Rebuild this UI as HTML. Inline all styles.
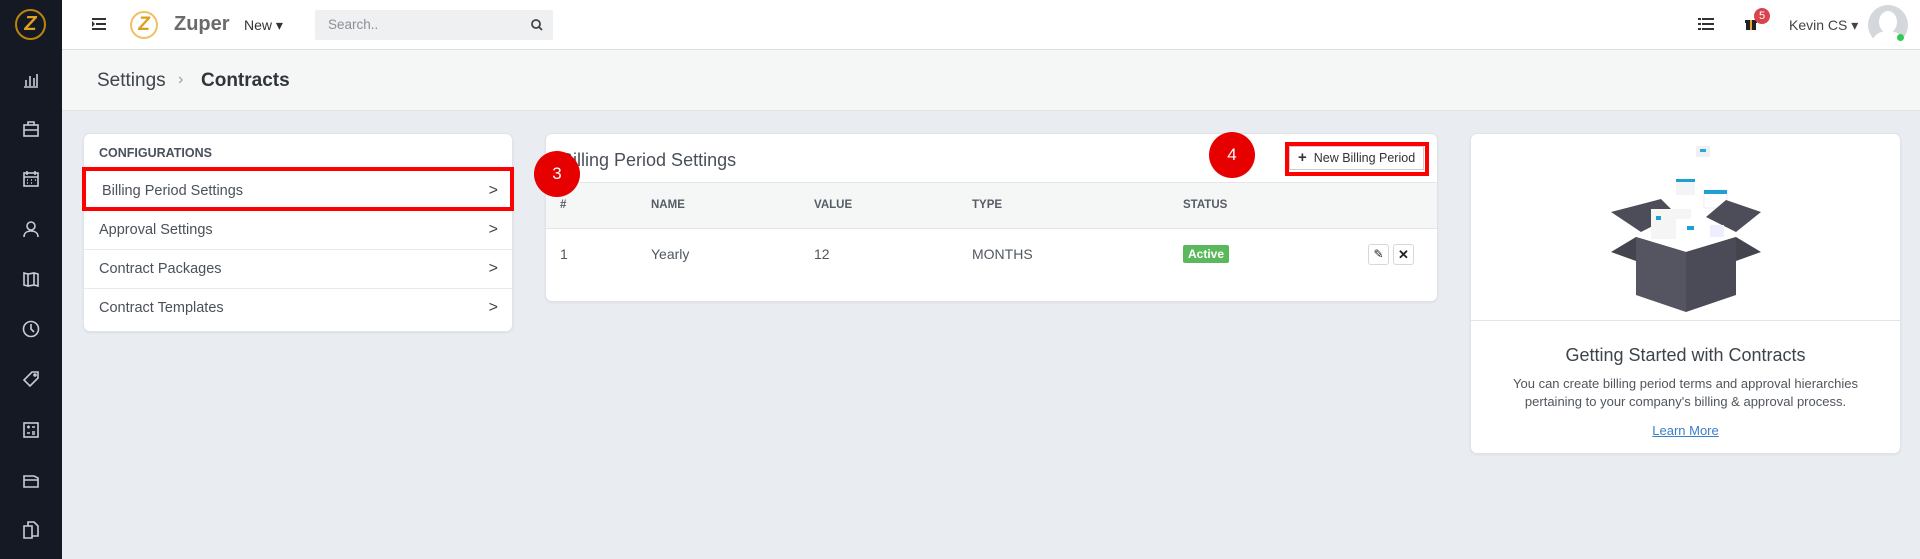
<!DOCTYPE html>
<html><head><meta charset="utf-8"><style>
*{box-sizing:border-box;margin:0;padding:0}
body{width:1920px;height:559px;overflow:hidden;background:#e9ecf0;font-family:"Liberation Sans",sans-serif;position:relative;color:#3f4650}
.abs{position:absolute}
.side{left:0;top:0;width:62px;height:559px;background:#151923}
.side svg{position:absolute;left:22px}
.hdr{left:62px;top:0;right:0;height:50px;background:#fff;border-bottom:1px solid #dcdfe3}
.crumb{left:62px;top:50px;right:0;height:61px;background:#f5f6f6;border-bottom:1px solid #e0e3e6}
.card{background:#fff;border:1px solid #e0e3e7;border-radius:7px;box-shadow:0 1px 2px rgba(0,0,0,.06)}
.row{position:absolute;left:0;right:0;height:39px;border-top:1px solid #e8eaed;font-size:14.5px;color:#4a515a;padding-left:15px;line-height:38px}
.row .ch{position:absolute;right:14px;top:0;font-size:16px;color:#444}
.th{position:absolute;top:199px;font-size:11.5px;font-weight:bold;color:#555c66}
.td{position:absolute;top:246px;font-size:14px;color:#50575f}
.badge{position:absolute;width:46px;height:46px;border-radius:50%;background:#e60000;color:#fff;font-size:17px;text-align:center;line-height:46px}
</style></head><body>
<div class="abs side">
 <div class="abs" style="left:15px;top:9px;width:31px;height:31px;border-radius:50%;border:2px solid #b8860b;color:#e0a020;font-weight:bold;font-size:20px;text-align:center;line-height:27px;font-style:italic">Z</div>
 <svg style="top:71px" width="18" height="18" viewBox="0 0 18 18" fill="none" stroke="#c8ccd4" stroke-width="1.6"><path d="M2 16h14M4 15V9M8 15V5M12 15V7M15 15V3"/></svg>
 <svg style="top:120px" width="18" height="18" viewBox="0 0 18 18" fill="none" stroke="#c8ccd4" stroke-width="1.6"><rect x="2" y="5" width="14" height="11"/><path d="M6 5V2h6v3M2 10h14"/></svg>
 <svg style="top:170px" width="18" height="18" viewBox="0 0 18 18" fill="none" stroke="#c8ccd4" stroke-width="1.6"><rect x="2" y="3" width="14" height="13"/><path d="M2 7h14M5 1v4M13 1v4M5 10h1M9 10h1M13 10h1M5 13h1M9 13h1"/></svg>
 <svg style="top:220px" width="18" height="18" viewBox="0 0 18 18" fill="none" stroke="#c8ccd4" stroke-width="1.6"><circle cx="9" cy="6" r="4"/><path d="M2 17c0-4 3-6 7-6s7 2 7 6"/></svg>
 <svg style="top:270px" width="18" height="18" viewBox="0 0 18 18" fill="none" stroke="#c8ccd4" stroke-width="1.6"><path d="M2 3l4 1 6-1 4 1v12l-4-1-6 1-4-1zM6 4v12M12 3v12"/></svg>
 <svg style="top:320px" width="18" height="18" viewBox="0 0 18 18" fill="none" stroke="#c8ccd4" stroke-width="1.6"><circle cx="9" cy="9" r="7.5"/><path d="M9 4v5l3 3"/></svg>
 <svg style="top:370px" width="18" height="18" viewBox="0 0 18 18" fill="none" stroke="#c8ccd4" stroke-width="1.6"><path d="M10 2h6v6l-8 8-6-6z"/><circle cx="13" cy="5" r="1"/></svg>
 <svg style="top:421px" width="18" height="18" viewBox="0 0 18 18" fill="none" stroke="#c8ccd4" stroke-width="1.6"><rect x="2" y="2" width="14" height="14"/><path d="M5 6h3M6.5 4.5v3M10 6h3M5 12h3M10 11h3M10 13h3"/></svg>
 <svg style="top:471px" width="18" height="18" viewBox="0 0 18 18" fill="none" stroke="#c8ccd4" stroke-width="1.6"><path d="M2 5h10l4 2v9H2zM2 9h14"/></svg>
 <svg style="top:521px" width="18" height="18" viewBox="0 0 18 18" fill="none" stroke="#c8ccd4" stroke-width="1.6"><path d="M2 5h8v12H2zM6 5V1h6l4 4v10h-6"/></svg>
</div>
<div class="abs hdr">
 <svg class="abs" style="left:30px;top:18px" width="14" height="12" viewBox="0 0 14 12" fill="#333"><rect x="0" y="0" width="14" height="2"/><rect x="4" y="5" width="10" height="2"/><rect x="0" y="10" width="14" height="2"/><path d="M0 3l3 3-3 3z"/></svg>
 <div class="abs" style="left:68px;top:11px;width:28px;height:28px;border-radius:50%;border:2px solid #f0c060;color:#d9a020;font-weight:bold;font-style:italic;font-size:19px;text-align:center;line-height:24px">Z</div>
 <div class="abs" style="left:112px;top:13px;font-size:20px;font-weight:bold;color:#6b6b6b">Zuper</div>
 <div class="abs" style="left:182px;top:17px;font-size:14px;color:#333">New ▾</div>
 <div class="abs" style="left:253px;top:10px;width:238px;height:30px;background:#eef0f2;border-radius:2px"><span class="abs" style="left:13px;top:7px;font-size:13.5px;color:#8b9097">Search..</span><svg class="abs" style="left:216px;top:9px" width="12" height="12" viewBox="0 0 12 12" fill="none" stroke="#444" stroke-width="1.8"><circle cx="5" cy="5" r="4"/><path d="M8 8l3 3"/></svg></div>
 <svg class="abs" style="left:1636px;top:18px" width="16" height="12" viewBox="0 0 16 12" fill="#333"><rect y="0" width="3" height="2"/><rect x="4" y="0" width="12" height="2"/><rect y="5" width="3" height="2"/><rect x="4" y="5" width="12" height="2"/><rect y="10" width="3" height="2"/><rect x="4" y="10" width="12" height="2"/></svg>
 <svg class="abs" style="left:1682px;top:16px" width="14" height="14" viewBox="0 0 14 14" fill="#222"><rect x="1" y="4" width="12" height="3"/><rect x="2" y="7" width="10" height="7"/><rect x="6" y="4" width="2" height="10" fill="#e8a53a"/></svg>
 <div class="abs" style="left:1692px;top:8px;width:16px;height:16px;border-radius:50%;background:#d9434e;color:#fff;font-size:11px;text-align:center;line-height:16px">5</div>
 <div class="abs" style="left:1727px;top:17px;font-size:14px;color:#444">Kevin CS ▾</div>
 <div class="abs" style="left:1806px;top:5px;width:40px;height:40px;border-radius:50%;background:#d4d7db;overflow:hidden"><div class="abs" style="left:11px;top:6px;width:18px;height:22px;border-radius:50%;background:#fff"></div><div class="abs" style="left:5px;top:26px;width:30px;height:20px;border-radius:50%;background:#fff"></div></div>
 <div class="abs" style="left:1835px;top:34px;width:7px;height:7px;border-radius:50%;background:#2ecc52"></div>
</div>
<div class="abs crumb"><span class="abs" style="left:35px;top:20px;font-size:19px;color:#3d444c">Settings</span><span class="abs" style="left:116px;top:21px;font-size:16px;color:#999">›</span><span class="abs" style="left:139px;top:20px;font-size:19px;font-weight:bold;color:#2f353c">Contracts</span></div>

<div class="abs card" style="left:83px;top:133px;width:430px;height:199px">
 <div class="abs" style="left:15px;top:12px;font-size:12.5px;font-weight:bold;color:#4a515a">CONFIGURATIONS</div>
 <div class="row" style="top:38px;border-top:none;padding-left:18px">Billing Period Settings<span class="ch">&gt;</span></div>
 <div class="row" style="top:76px">Approval Settings<span class="ch">&gt;</span></div>
 <div class="row" style="top:115px">Contract Packages<span class="ch">&gt;</span></div>
 <div class="row" style="top:154px">Contract Templates<span class="ch">&gt;</span></div>
</div>
<div class="abs" style="left:82px;top:167px;width:432px;height:44px;border:4px solid #f00"></div>

<div class="abs card" style="left:545px;top:133px;width:893px;height:169px">
 <div class="abs" style="left:0;right:0;top:48px;height:47px;background:#f5f6f6;border-top:1px solid #e3e5e8;border-bottom:1px solid #e3e5e8"></div>
 <div class="abs" style="left:15px;top:16px;font-size:18px;color:#4a5058">Billing Period Settings</div>
 <div class="abs" style="left:743px;top:12px;width:135px;height:24px;border:1px solid #ccc;font-size:12.5px;color:#333;line-height:22px;padding-left:8px"><b style="font-size:15px">+</b>&nbsp; New Billing Period</div>
</div>
<div class="abs" style="left:1285px;top:142px;width:144px;height:34px;border:4px solid #f00"></div>
<div class="th" style="left:560px">#</div><div class="th" style="left:651px">NAME</div><div class="th" style="left:814px">VALUE</div><div class="th" style="left:972px">TYPE</div><div class="th" style="left:1183px">STATUS</div>
<div class="td" style="left:560px">1</div><div class="td" style="left:651px">Yearly</div><div class="td" style="left:814px">12</div><div class="td" style="left:972px">MONTHS</div>
<div class="abs" style="left:1183px;top:245px;width:46px;height:18px;background:#5cb85c;border-radius:2px;color:#fff;font-size:12px;font-weight:bold;text-align:center;line-height:18px">Active</div>
<div class="abs" style="left:1368px;top:244px;width:21px;height:21px;border:1px solid #d5d8dc;border-radius:3px;font-size:12px;text-align:center;line-height:19px;color:#222">✎</div>
<div class="abs" style="left:1393px;top:244px;width:21px;height:21px;border:1px solid #d5d8dc;border-radius:3px;font-size:13px;font-weight:bold;text-align:center;line-height:19px;color:#222">✕</div>
<div class="badge" style="left:534px;top:151px">3</div>
<div class="badge" style="left:1209px;top:132px">4</div>

<div class="abs card" style="left:1470px;top:133px;width:431px;height:321px">
 <div class="abs" style="left:0;right:0;top:186px;border-top:1px solid #e2e4e7"></div>
 <svg class="abs" style="left:140px;top:8px" width="160" height="170" viewBox="0 0 160 170">
  <rect x="85" y="4" width="14" height="11" fill="#eef0f2"/><rect x="89" y="7" width="6" height="3" fill="#2aa7d8"/>
  <rect x="65" y="37" width="19" height="16" fill="#f3f4f6"/><rect x="65" y="37" width="19" height="3" fill="#1ea0d4"/>
  <rect x="93" y="48" width="23" height="18" fill="#fff" stroke="#ddd" stroke-width=".5"/><rect x="93" y="48" width="23" height="4" fill="#1ea0d4"/>
  <polygon points="0,70 50,57 65,72 30,90" fill="#4d4d59"/>
  <polygon points="150,70 115,58 95,75 125,90" fill="#4d4d59"/>
  <rect x="40" y="67" width="40" height="30" fill="#f5f5f5"/><rect x="45" y="74" width="5" height="4" fill="#1ea0d4"/>
  <rect x="65" y="77" width="30" height="25" fill="#fff"/><rect x="76" y="84" width="7" height="4" fill="#1ea0d4"/>
  <rect x="99" y="83" width="14" height="12" fill="#eef"/>
  <polygon points="0,110 25,95 75,110 50,128" fill="#44444f"/>
  <polygon points="150,110 125,95 75,110 100,128" fill="#44444f"/>
  <polygon points="25,95 75,110 75,170 25,153" fill="#555562"/>
  <polygon points="125,95 75,110 75,170 125,153" fill="#4b4b57"/>
 </svg>
 <div class="abs" style="left:0;right:0;top:211px;text-align:center;font-size:18px;color:#3e444b">Getting Started with Contracts</div>
 <div class="abs" style="left:0;right:0;top:241px;text-align:center;font-size:13px;line-height:18px;color:#50565d">You can create billing period terms and approval hierarchies<br>pertaining to your company's billing &amp; approval process.</div>
 <div class="abs" style="left:0;right:0;top:289px;text-align:center;font-size:13px;color:#3b7fc4;text-decoration:underline">Learn More</div>
</div>
</body></html>
